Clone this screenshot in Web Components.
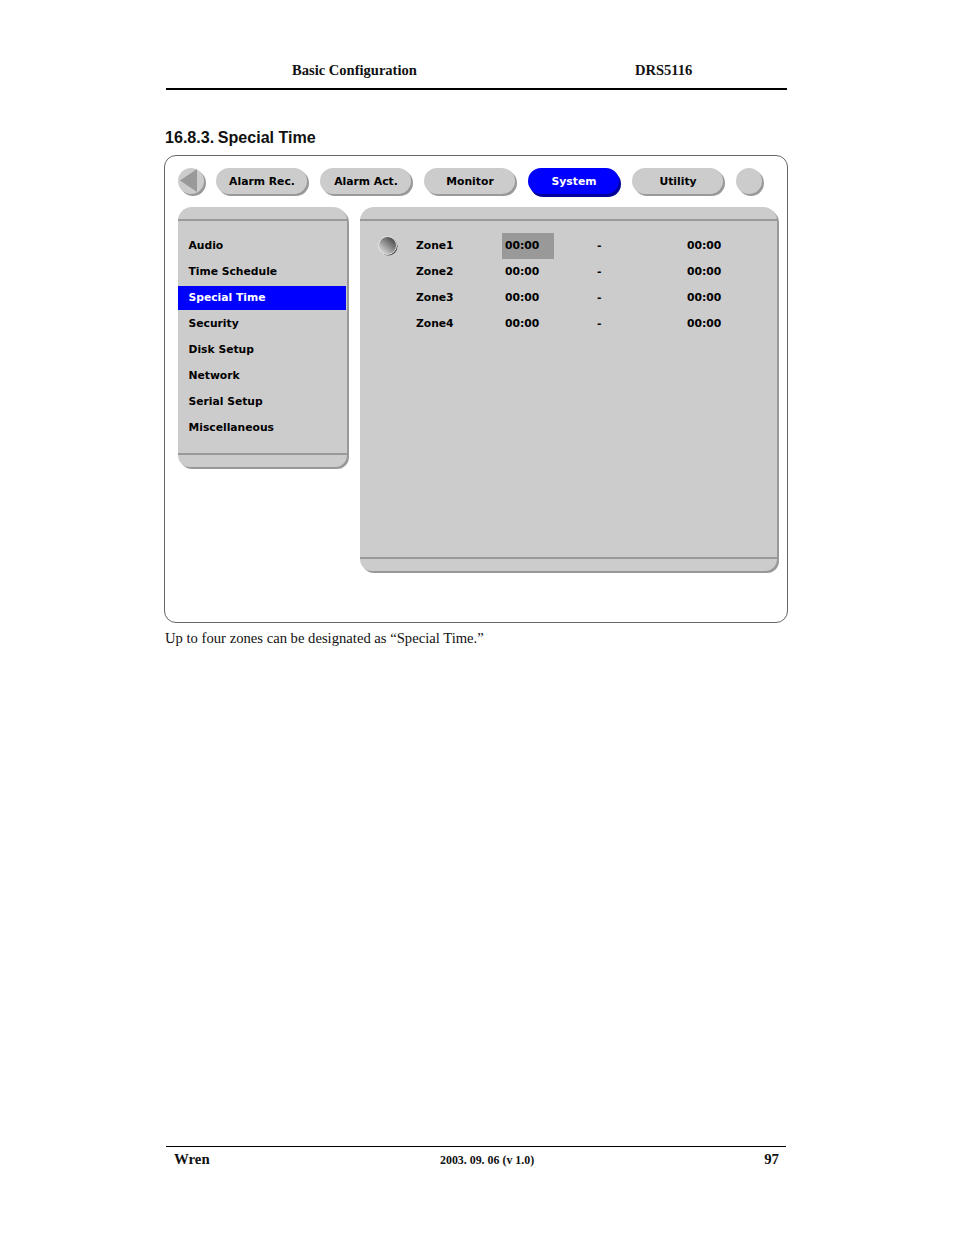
<!DOCTYPE html>
<html>
<head>
<meta charset="utf-8">
<title>Special Time</title>
<style>
  html, body { margin: 0; background: #fff; }
</style>
</head>
<body>
<manual-page>
  <page-header slot="header" title-text="Basic Configuration" model="DRS5116"></page-header>
  <h2-title slot="title" number="16.8.3.">Special Time</h2-title>
  <osd-screen slot="figure">
    <osd-tabs slot="tabs">
      <osd-round kind="back"></osd-round>
      <osd-tab>Alarm Rec.</osd-tab>
      <osd-tab>Alarm Act.</osd-tab>
      <osd-tab>Monitor</osd-tab>
      <osd-tab active>System</osd-tab>
      <osd-tab>Utility</osd-tab>
      <osd-round></osd-round>
    </osd-tabs>
    <osd-menu slot="menu">
      <osd-menu-item>Audio</osd-menu-item>
      <osd-menu-item>Time Schedule</osd-menu-item>
      <osd-menu-item active>Special Time</osd-menu-item>
      <osd-menu-item>Security</osd-menu-item>
      <osd-menu-item>Disk Setup</osd-menu-item>
      <osd-menu-item>Network</osd-menu-item>
      <osd-menu-item>Serial Setup</osd-menu-item>
      <osd-menu-item>Miscellaneous</osd-menu-item>
    </osd-menu>
    <osd-content slot="content">
      <zone-row name="Zone1" start="00:00" end="00:00" current></zone-row>
      <zone-row name="Zone2" start="00:00" end="00:00"></zone-row>
      <zone-row name="Zone3" start="00:00" end="00:00"></zone-row>
      <zone-row name="Zone4" start="00:00" end="00:00"></zone-row>
    </osd-content>
  </osd-screen>
  <span slot="caption">Up to four zones can be designated as “Special Time.”</span>
  <page-footer slot="footer" brand="Wren" date="2003. 09. 06 (v 1.0)" page="97"></page-footer>
</manual-page>

<script>
class ManualPage extends HTMLElement {
    constructor() {
        super();
        this.attachShadow({ mode: 'open' });
        this.shadowRoot.innerHTML = `
            <style>
                :host {
                    display: flex;
                    flex-direction: column;
                    box-sizing: border-box;
                    height: 1235px;
                    padding: 62px 166px 0 165px;
                    overflow: hidden;
                }
                .title { margin-top: 38px; }
                .figure { margin-top: 8px; }
                .caption {
                    margin-top: 6px;
                    font: 14.65px/18px "Liberation Serif", serif;
                    color: #111;
                }
                .footer { margin-top: auto; padding-bottom: 64px; }
            </style>
            <slot name="header"></slot>
            <div class="title"><slot name="title"></slot></div>
            <div class="figure"><slot name="figure"></slot></div>
            <div class="caption"><slot name="caption"></slot></div>
            <div class="footer"><slot name="footer"></slot></div>
        `;
    }
}

class PageHeader extends HTMLElement {
    constructor() {
        super();
        this.attachShadow({ mode: 'open' });
        this.shadowRoot.innerHTML = `
            <style>
                :host {
                    display: block;
                    margin: 0 1px;
                    height: 26px;
                    border-bottom: 2px solid #000;
                    font: bold 14.55px/17px "Liberation Serif", serif;
                    color: #111;
                }
                .row { display: flex; padding-left: 126px; }
                .left { width: 343px; }
            </style>
            <div class="row">
                <span class="left">${this.getAttribute('title-text')}</span>
                <span>${this.getAttribute('model')}</span>
            </div>
        `;
    }
}

class H2Title extends HTMLElement {
    constructor() {
        super();
        this.attachShadow({ mode: 'open' });
        this.shadowRoot.innerHTML = `
            <style>
                :host {
                    display: flex;
                    gap: 3.5px;
                    font: bold 16.1px/19px "Liberation Sans", sans-serif;
                    color: #111;
                }
            </style>
            <span>${this.getAttribute('number')}</span>
            <span><slot></slot></span>
        `;
    }
}

class OsdScreen extends HTMLElement {
    constructor() {
        super();
        this.attachShadow({ mode: 'open' });
        this.shadowRoot.innerHTML = `
            <style>
                :host {
                    display: block;
                    box-sizing: border-box;
                    height: 468px;
                    margin-left: -1px;
                    border: 1px solid #666;
                    border-radius: 12px;
                    padding: 12px 10px 0 13px;
                    background: #fff;
                }
                .body {
                    display: flex;
                    align-items: flex-start;
                    gap: 13px;
                    margin-top: 10px;
                }
            </style>
            <slot name="tabs"></slot>
            <div class="body">
                <slot name="menu"></slot>
                <slot name="content"></slot>
            </div>
        `;
    }
}

class OsdTabs extends HTMLElement {
    constructor() {
        super();
        this.attachShadow({ mode: 'open' });
        this.shadowRoot.innerHTML = `
            <style>
                :host { display: flex; align-items: flex-start; height: 29px; }
                ::slotted(osd-tab) { margin-right: 13px; }
                ::slotted(osd-round:first-child) { margin-right: 12px; }
            </style>
            <slot></slot>
        `;
    }
}

class OsdTab extends HTMLElement {
    constructor() {
        super();
        this.attachShadow({ mode: 'open' });
        this.shadowRoot.innerHTML = `
            <style>
                :host {
                    display: flex;
                    align-items: center;
                    justify-content: center;
                    box-sizing: border-box;
                    width: 91px;
                    height: 26px;
                    padding: 0 0 0 1px;
                    border-radius: 13px;
                    background: #ccc;
                    box-shadow: 2px 2px 0 #999;
                    font: bold 10.8px/13px "DejaVu Sans", sans-serif;
                    color: #000;
                }
                :host([active]) {
                    background: #00f;
                    box-shadow: 2px 3px 0 #00009a;
                    color: #fff;
                }
            </style>
            <slot></slot>
        `;
    }
}

class OsdRound extends HTMLElement {
    constructor() {
        super();
        this.attachShadow({ mode: 'open' });
        const arrow = this.getAttribute('kind') === 'back'
            ? '<svg width="26" height="26" viewBox="0 0 26 26"><path d="M2 12.500 L19 1 L19 24 Z" fill="#999"/></svg>'
            : '';
        this.shadowRoot.innerHTML = `
            <style>
                :host {
                    display: block;
                    width: 26px;
                    height: 26px;
                    border-radius: 50%;
                    background: #ccc;
                    box-shadow: 2px 2px 0 #999;
                }
                svg { display: block; }
            </style>
            ${arrow}
        `;
    }
}

class OsdMenu extends HTMLElement {
    constructor() {
        super();
        this.attachShadow({ mode: 'open' });
        this.shadowRoot.innerHTML = `
            <style>
                :host {
                    display: block;
                    width: 169px;
                    background: #ccc;
                    border-radius: 14px 14px 12px 12px;
                    box-shadow: 2px 2px 0 #999;
                }
                .top { height: 12px; border-bottom: 2px solid #999; }
                .list { padding: 11px 1px 13px 0; }
                .bottom { height: 12px; border-top: 2px solid #999; }
            </style>
            <div class="top"></div>
            <div class="list"><slot></slot></div>
            <div class="bottom"></div>
        `;
    }
}

class OsdMenuItem extends HTMLElement {
    constructor() {
        super();
        this.attachShadow({ mode: 'open' });
        this.shadowRoot.innerHTML = `
            <style>
                :host {
                    display: flex;
                    align-items: center;
                    box-sizing: border-box;
                    height: 26px;
                    padding-left: 10.5px;
                    font: bold 10.75px/13px "DejaVu Sans", sans-serif;
                    color: #000;
                }
                :host([active]) {
                    background: linear-gradient(#00f, #00f) 0 2px / 100% 24px no-repeat;
                    color: #fff;
                }
            </style>
            <slot></slot>
        `;
    }
}

class OsdContent extends HTMLElement {
    constructor() {
        super();
        this.attachShadow({ mode: 'open' });
        this.shadowRoot.innerHTML = `
            <style>
                :host {
                    display: block;
                    flex: 1;
                    background: #ccc;
                    border-radius: 14px 14px 12px 12px;
                    box-shadow: 2px 2px 0 #999;
                }
                .top { height: 12px; border-bottom: 2px solid #999; }
                .rows { height: 336px; padding-top: 12px; box-sizing: border-box; }
                .bottom { height: 12px; border-top: 2px solid #999; }
            </style>
            <div class="top"></div>
            <div class="rows"><slot></slot></div>
            <div class="bottom"></div>
        `;
    }
}

class ZoneRow extends HTMLElement {
    constructor() {
        super();
        this.attachShadow({ mode: 'open' });
        const current = this.hasAttribute('current');
        const ball = current ? `
            <svg width="20" height="20" viewBox="0 0 20 20">
                <defs>
                    <linearGradient id="ball" x1="0.85" y1="0.1" x2="0.15" y2="0.9">
                        <stop offset="0" stop-color="#444"/>
                        <stop offset="1" stop-color="#ddd"/>
                    </linearGradient>
                </defs>
                <circle cx="10.500" cy="10.500" r="9" fill="#333"/>
                <circle cx="9.500" cy="9.500" r="9" fill="url(#ball)" stroke="#e6e6e6"/>
            </svg>` : '';
        this.shadowRoot.innerHTML = `
            <style>
                :host {
                    display: grid;
                    grid-template-columns: 56px 86px 95px 90px 1fr;
                    align-items: start;
                    height: 26px;
                    font: bold 10.75px/26px "DejaVu Sans", sans-serif;
                    color: #000;
                }
                .mark { position: relative; height: 26px; }
                svg { position: absolute; left: 18px; top: 3px; }
                .start { height: 26px; width: 52px; padding-left: 3px; box-sizing: border-box; }
                .start.on { background: #999; }
            </style>
            <div class="mark">${ball}</div>
            <span>${this.getAttribute('name')}</span>
            <span class="start ${current ? 'on' : ''}">${this.getAttribute('start')}</span>
            <span>-</span>
            <span>${this.getAttribute('end')}</span>
        `;
    }
}

class PageFooter extends HTMLElement {
    constructor() {
        super();
        this.attachShadow({ mode: 'open' });
        this.shadowRoot.innerHTML = `
            <style>
                :host {
                    display: block;
                    margin: 0 2px 0 1px;
                    border-top: 1px solid #000;
                    color: #111;
                    font-family: "Liberation Serif", serif;
                    font-weight: bold;
                }
                .row {
                    display: grid;
                    grid-template-columns: 266px 1fr auto;
                    align-items: center;
                    height: 24px;
                    padding: 0 7px 0 8px;
                }
                .brand, .page { font-size: 14.8px; }
                .date { font-size: 11.9px; padding-top: 2px; }
            </style>
            <div class="row">
                <span class="brand">${this.getAttribute('brand')}</span>
                <span class="date">${this.getAttribute('date')}</span>
                <span class="page">${this.getAttribute('page')}</span>
            </div>
        `;
    }
}

customElements.define('manual-page', ManualPage);
customElements.define('page-header', PageHeader);
customElements.define('h2-title', H2Title);
customElements.define('osd-screen', OsdScreen);
customElements.define('osd-tabs', OsdTabs);
customElements.define('osd-tab', OsdTab);
customElements.define('osd-round', OsdRound);
customElements.define('osd-menu', OsdMenu);
customElements.define('osd-menu-item', OsdMenuItem);
customElements.define('osd-content', OsdContent);
customElements.define('zone-row', ZoneRow);
customElements.define('page-footer', PageFooter);
</script>
</body>
</html>
